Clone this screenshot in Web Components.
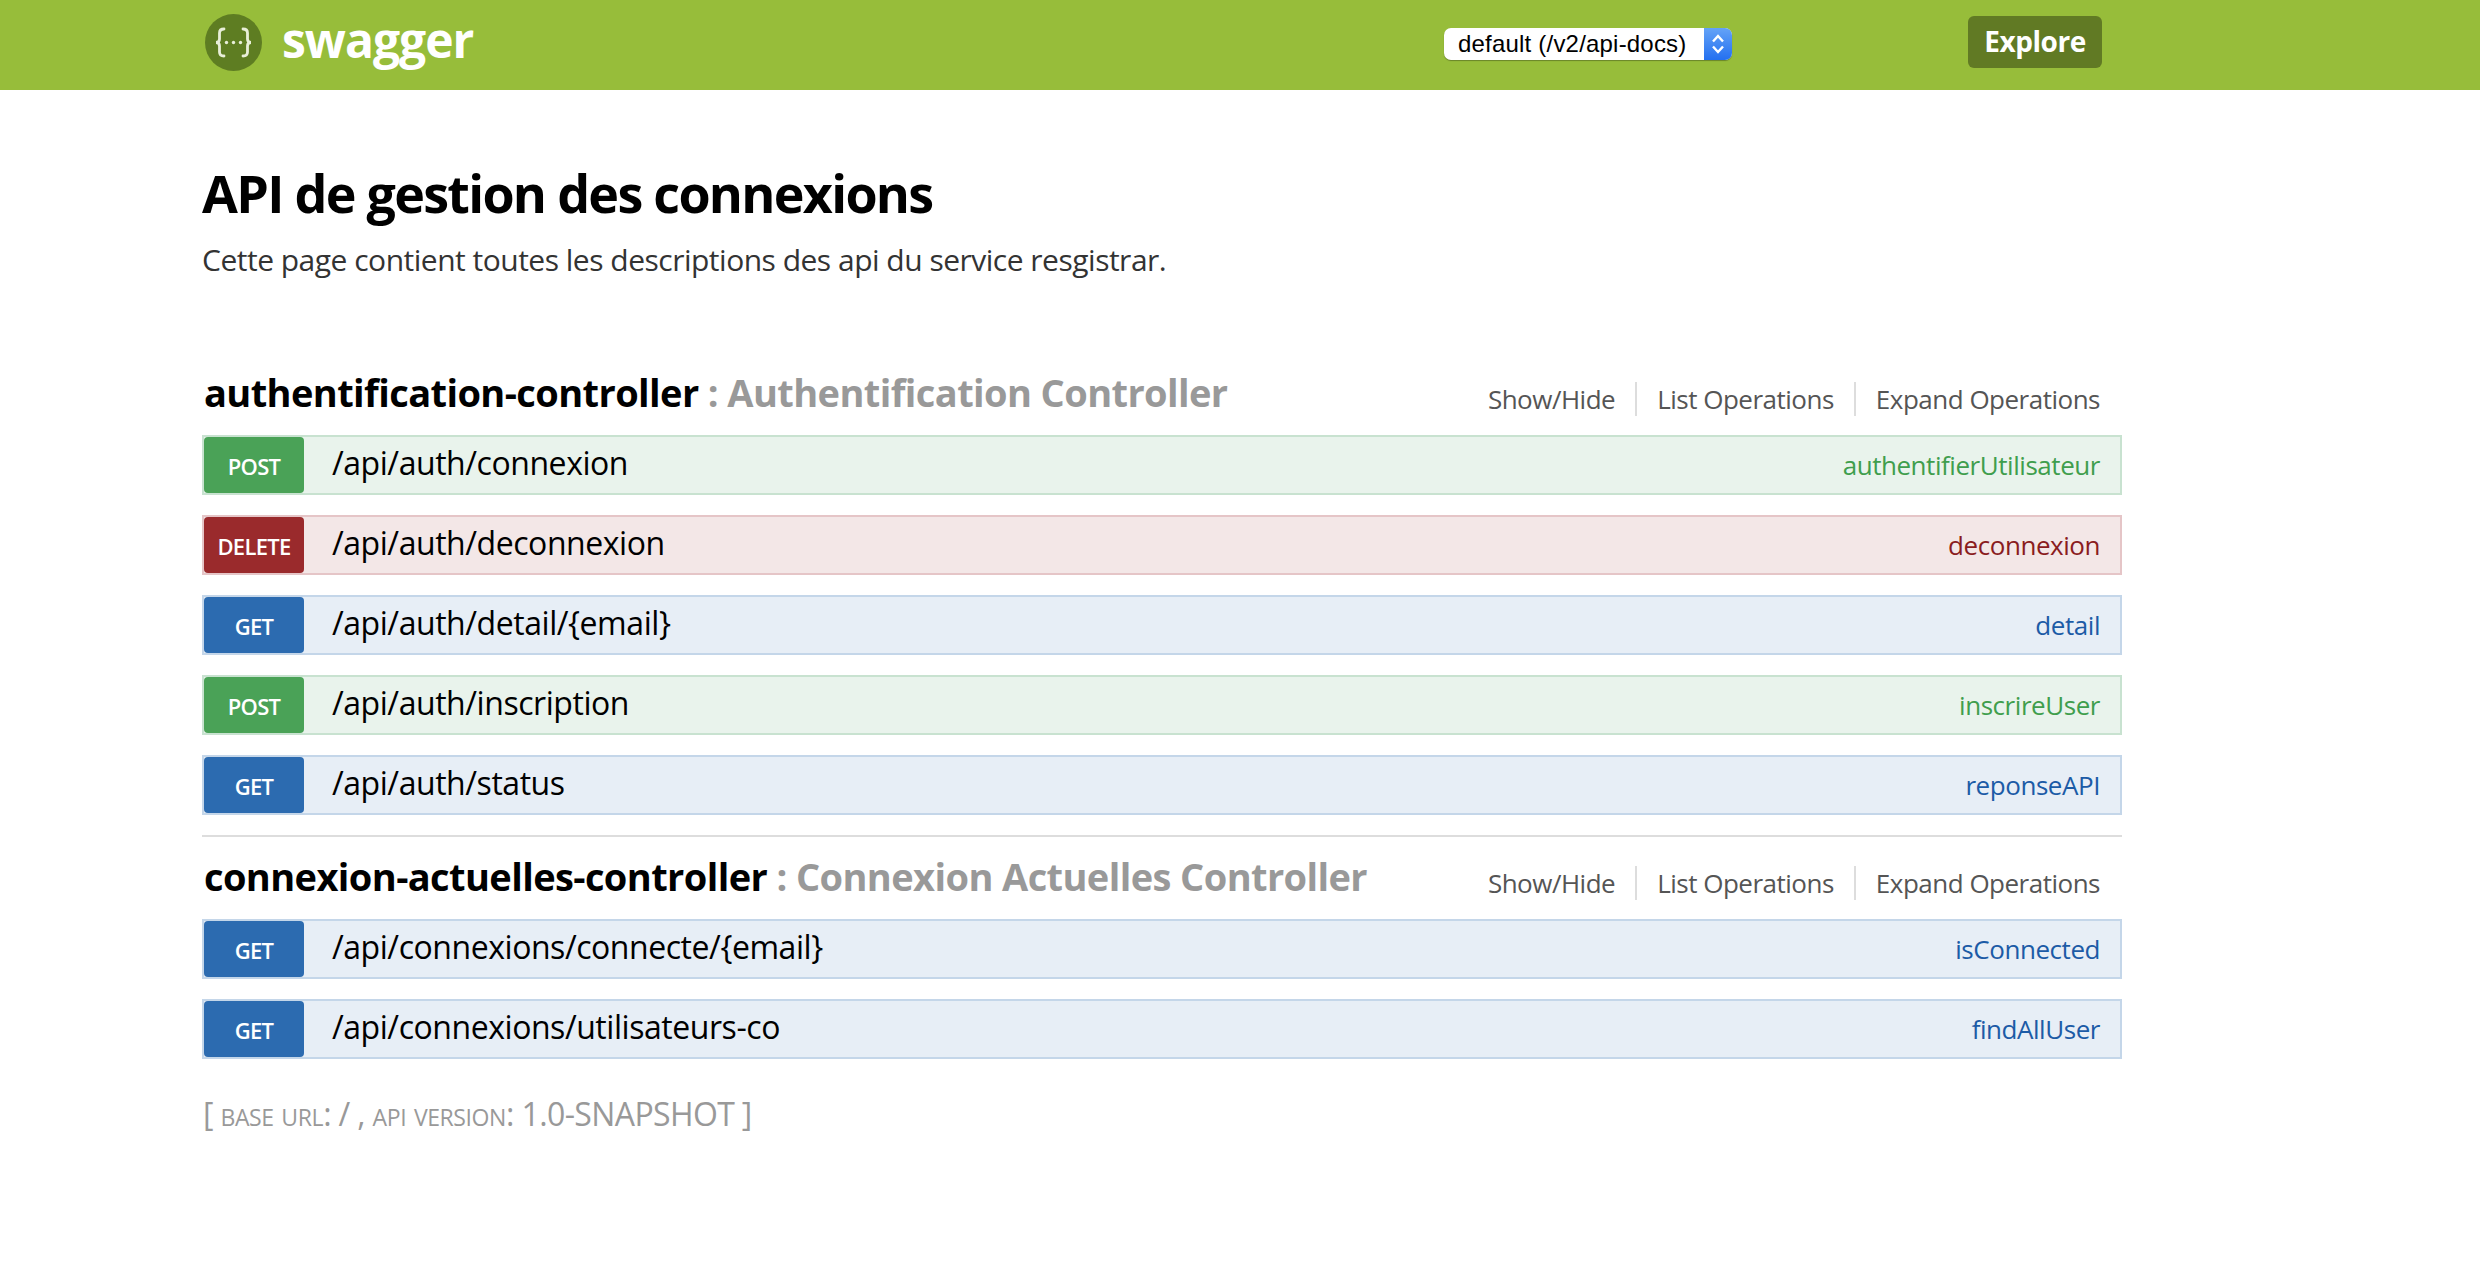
<!DOCTYPE html>
<html lang="fr">
<head>
<meta charset="utf-8">
<title>Swagger UI</title>
<style>
  html, body { margin: 0; background: #fff; }
  body { font-family: "Open Sans", sans-serif; color: #000; }
  main { display: block; width: 1920px; margin-left: 202px; }
</style>
</head>
<body>
<swagger-header></swagger-header>
<main>
  <api-info heading="API de gestion des connexions">Cette page contient toutes les descriptions des api du service resgistrar.</api-info>

  <api-group name="authentification-controller" label="Authentification Controller">
    <api-op method="post" path="/api/auth/connexion" nick="authentifierUtilisateur"></api-op>
    <api-op method="delete" path="/api/auth/deconnexion" nick="deconnexion"></api-op>
    <api-op method="get" path="/api/auth/detail/{email}" nick="detail"></api-op>
    <api-op method="post" path="/api/auth/inscription" nick="inscrireUser"></api-op>
    <api-op method="get" path="/api/auth/status" nick="reponseAPI"></api-op>
  </api-group>

  <api-group name="connexion-actuelles-controller" label="Connexion Actuelles Controller" last>
    <api-op method="get" path="/api/connexions/connecte/{email}" nick="isConnected"></api-op>
    <api-op method="get" path="/api/connexions/utilisateurs-co" nick="findAllUser"></api-op>
  </api-group>

  <api-footer base="/ ," version="1.0-SNAPSHOT"></api-footer>
</main>

<script>
'use strict';

class SwaggerHeader extends HTMLElement {
  constructor() {
    super();
    this.attachShadow({ mode: 'open' });
    this.shadowRoot.innerHTML = `
      <style>
        :host {
          display: flex;
          align-items: center;
          height: 90px;
          background: #97bd3a;
          padding: 0 378px 0 205px;
          font-family: "Open Sans", sans-serif;
        }
        .logo { display: flex; align-items: center; gap: 20px; margin-top: -6px; }
        .logo svg { display: block; width: 57px; height: 57px; }
        .logo span {
          color: #fff;
          font-weight: 700;
          font-size: 48px;
          letter-spacing: -1px;
          line-height: 60px;
          margin-top: -4px;
        }
        .select {
          display: flex;
          width: 288px;
          height: 32px;
          margin-left: auto;
          margin-top: -2px;
          border-radius: 7px;
          overflow: hidden;
          background: #fff;
          box-shadow: 0 1px 1px rgba(0, 0, 0, 0.3);
          font-family: "Liberation Sans", sans-serif;
          font-size: 24px;
          letter-spacing: 0.2px;
          line-height: 32px;
          color: #000;
        }
        .select span { flex: 1; padding-left: 14px; white-space: nowrap; }
        .select i {
          display: flex;
          align-items: center;
          justify-content: center;
          width: 28px;
          background: linear-gradient(#64a3f7, #2470f0);
        }
        .explore {
          width: 134px;
          height: 52px;
          margin-left: 236px;
          margin-top: -6px;
          border-radius: 6px;
          background: #617a24;
          color: #fff;
          font-weight: 700;
          font-size: 28px;
          letter-spacing: -0.45px;
          line-height: 50px;
          text-align: center;
        }
      </style>
      <div class="logo">
        <svg viewBox="0 0 57 57">
          <circle cx="28.5" cy="28.5" r="28.5" fill="#5e7d22"/>
          <g fill="none" stroke="#e8eed8" stroke-width="2.8" stroke-linecap="round">
            <path d="M19 15c-3.500 0-4.500 1.500-4.500 4v6c0 2-1 3.500-3.500 3.500 2.500 0 3.500 1.500 3.500 3.500v6c0 2.500 1 4 4.500 4"/>
            <path d="M38 15c3.500 0 4.500 1.500 4.500 4v6c0 2 1 3.500 3.500 3.500-2.500 0-3.500 1.500-3.500 3.500v6c0 2.500-1 4-4.500 4"/>
          </g>
          <g fill="#e8eed8">
            <circle cx="21.500" cy="28.500" r="1.700"/>
            <circle cx="28.500" cy="28.500" r="1.700"/>
            <circle cx="35.500" cy="28.500" r="1.700"/>
          </g>
        </svg>
        <span>swagger</span>
      </div>
      <div class="select">
        <span>default (/v2/api-docs)</span>
        <i>
          <svg width="16" height="24" viewBox="0 0 16 24" fill="none" stroke="#fff" stroke-width="2.400">
            <path d="M3 9.500 8 4l5 5.500M3 14.500 8 20l5-5.500"/>
          </svg>
        </i>
      </div>
      <div class="explore">Explore</div>
    `;
  }
}
customElements.define('swagger-header', SwaggerHeader);

class ApiInfo extends HTMLElement {
  constructor() {
    super();
    this.attachShadow({ mode: 'open' });
    this.shadowRoot.innerHTML = `
      <style>
        :host { display: block; padding: 70px 0 73px; }
        h1 {
          margin: 0 0 14px;
          font-size: 52px;
          letter-spacing: -1.7px;
          line-height: 66px;
          font-weight: 700;
          color: #000;
        }
        p {
          margin: 0;
          font-size: 30px;
          letter-spacing: -0.5px;
          line-height: 40px;
          color: #333;
        }
      </style>
      <h1></h1>
      <p><slot></slot></p>
    `;
  }

  connectedCallback() {
    this.shadowRoot.querySelector('h1').textContent = this.getAttribute('heading');
  }
}
customElements.define('api-info', ApiInfo);

class ApiGroup extends HTMLElement {
  constructor() {
    super();
    this.attachShadow({ mode: 'open' });
    this.shadowRoot.innerHTML = `
      <style>
        :host { display: block; }
        :host(:not([last])) { border-bottom: 2px solid #ddd; padding-bottom: 20px; }
        header {
          display: flex;
          justify-content: space-between;
          height: 82px;
          padding: 0 22px 0 2px;
        }
        h2 {
          margin: 0;
          font-size: 38px;
          letter-spacing: -0.6px;
          line-height: 78px;
          font-weight: 700;
          color: #000;
          white-space: nowrap;
        }
        h2 .label { color: #999; }
        ul {
          display: flex;
          align-items: flex-start;
          list-style: none;
          margin: 29px 0 0;
          padding: 0;
          font-size: 26px;
          letter-spacing: -0.5px;
          line-height: 34px;
          color: #555;
          white-space: nowrap;
        }
        li { padding: 0 20px; border-right: 2px solid #ddd; }
        li:last-child { padding-right: 0; border-right: 0; }
        section { display: flex; flex-direction: column; gap: 20px; }
      </style>
      <header>
        <h2><span class="name"></span> <span class="label"></span></h2>
        <ul>
          <li>Show/Hide</li>
          <li>List Operations</li>
          <li>Expand Operations</li>
        </ul>
      </header>
      <section><slot></slot></section>
    `;
  }

  connectedCallback() {
    this.shadowRoot.querySelector('.name').textContent = this.getAttribute('name');
    this.shadowRoot.querySelector('.label').textContent = ': ' + this.getAttribute('label');
  }
}
customElements.define('api-group', ApiGroup);

class ApiOp extends HTMLElement {
  constructor() {
    super();
    this.attachShadow({ mode: 'open' });
    this.shadowRoot.innerHTML = `
      <style>
        :host {
          display: flex;
          align-items: center;
          box-sizing: border-box;
          height: 60px;
          padding: 0 12px 0 0;
          border: 2px solid var(--line);
          background: var(--tint);
          font-family: "Open Sans", sans-serif;
        }
        :host([method="post"]) { --line: #c8e2d0; --tint: #e9f3ec; --solid: #4aa257; --ink: #3f9e4d; }
        :host([method="delete"]) { --line: #e5c5c7; --tint: #f3e7e7; --solid: #9a2a2c; --ink: #8a1c1e; }
        :host([method="get"]) { --line: #c4d6e9; --tint: #e7eef6; --solid: #2c6bb0; --ink: #1c5ba6; }
        .method {
          width: 100px;
          height: 56px;
          border-radius: 4px;
          background: var(--solid);
          color: #fff;
          font-size: 22px;
          letter-spacing: -0.7px;
          font-weight: 600;
          line-height: 58px;
          text-align: center;
        }
        .path { flex: 1; padding-left: 28px; font-size: 32px; letter-spacing: -0.45px; line-height: 50px; color: #000; margin-top: -4px; }
        .nick { font-size: 26px; letter-spacing: -0.45px; padding-right: 8px; color: var(--ink); }
      </style>
      <span class="method"></span>
      <span class="path"></span>
      <span class="nick"></span>
    `;
  }

  connectedCallback() {
    this.shadowRoot.querySelector('.method').textContent = this.getAttribute('method').toUpperCase();
    this.shadowRoot.querySelector('.path').textContent = this.getAttribute('path');
    this.shadowRoot.querySelector('.nick').textContent = this.getAttribute('nick');
  }
}
customElements.define('api-op', ApiOp);

class ApiFooter extends HTMLElement {
  constructor() {
    super();
    this.attachShadow({ mode: 'open' });
    this.shadowRoot.innerHTML = `
      <style>
        :host {
          display: block;
          margin-top: 33px;
          padding-left: 1px;
          font-size: 32px;
          letter-spacing: -0.4px;
          word-spacing: -0.5px;
          line-height: 44px;
          color: #999;
        }
        .sc { font-variant: small-caps; font-size: 33px; }
        .version { letter-spacing: -0.6px; }
      </style>
      [ <span class="sc">base url</span>: <span class="base"></span> <span class="sc">api version</span>: <span class="version"></span> ]
    `;
  }

  connectedCallback() {
    this.shadowRoot.querySelector('.base').textContent = this.getAttribute('base');
    this.shadowRoot.querySelector('.version').textContent = this.getAttribute('version');
  }
}
customElements.define('api-footer', ApiFooter);
</script>
</body>
</html>
